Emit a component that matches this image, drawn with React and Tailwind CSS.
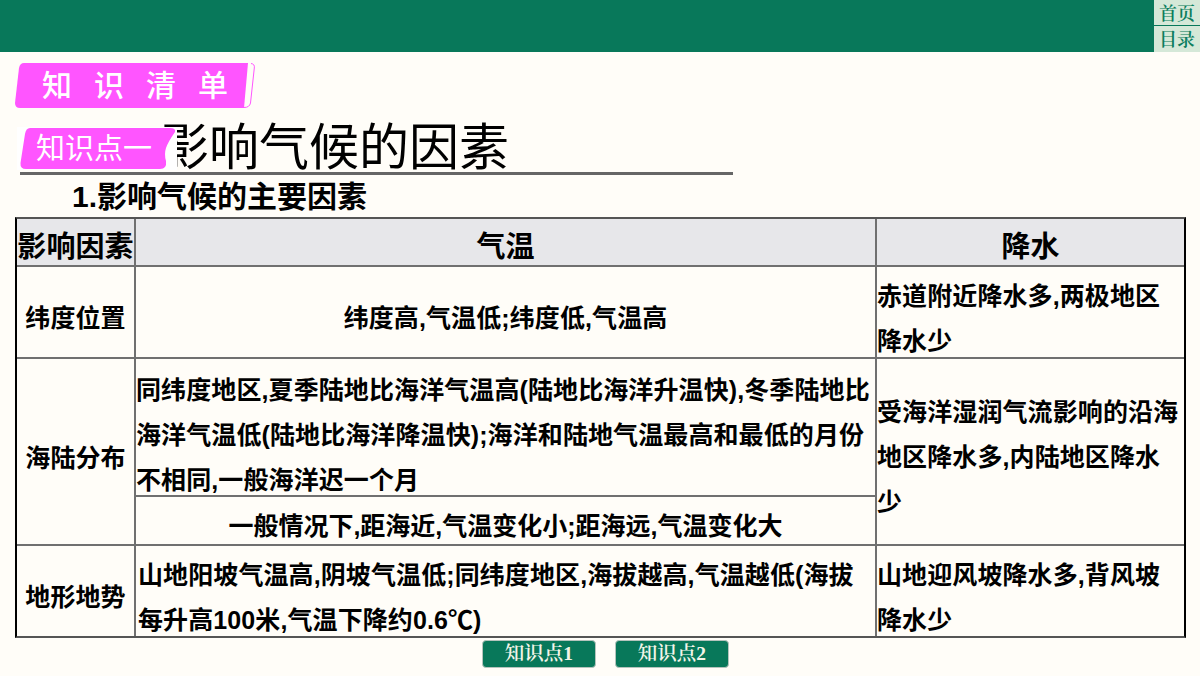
import React from 'react';

const cjk = "font-['Liberation_Sans','Noto_Sans_CJK_SC',sans-serif]";
const serif = "font-['Liberation_Serif','Noto_Serif_CJK_SC','Noto_Sans_CJK_SC',serif]";

const Cell = ({ className = '', children }) => (
  <div className={`flex border-[#707070] ${className}`}>{children}</div>
);

const NavButton = ({ children }) => (
  <button className={`w-[114px] h-[28px] rounded-[4px] bg-[#08785a] border border-[#b5c4bd] text-[#f3f5e8] text-[19.5px] font-semibold leading-none ${serif}`}>
    {children}
  </button>
);

export default function App() {
  return (
    <div className={`w-[1200px] h-[676px] overflow-hidden bg-[#fffdf8] text-black ${cjk}`}>
      {/* Top bar */}
      <header className="flex h-[52px] bg-[#08785a]">
        <div className="flex-1" />
        <div className={`w-[46px] flex flex-col text-[#0b7d5d] text-[18px] font-semibold leading-none ${serif}`}>
          <div className="h-[25px] pt-[2px] bg-[#d5e8d8] flex items-center justify-center">首页</div>
          <div className="h-[26px] pt-[2px] mt-[1px] bg-[#d5e8d8] flex items-center justify-center">目录</div>
        </div>
      </header>

      <div className="pl-[15px] pt-[11px]">
        {/* Section ribbon */}
        <div className="relative w-[240px] h-[45px] flex items-center pl-[27px]">
          <svg className="absolute left-0 top-0" width="241" height="45" viewBox="0 0 241 45" fill="none">
            <path d="M9 0H233L229 45H5Q0 45 0 40L4 5Q5 0 9 0Z" fill="#ff55ff" />
            <path d="M236 .5Q240 1 239.300 5L235.500 40Q234.500 44.500 229 44.500" stroke="#ff55ff" strokeWidth="1" />
          </svg>
          <span className="relative text-white text-[30px] font-medium leading-none tracking-[22px] whitespace-nowrap">知识清单</span>
        </div>

        {/* Heading */}
        <div className="relative w-[713px] h-[67px] ml-[5px] border-b-[3px] border-[#666]">
          <h1 className="absolute left-[139px] top-[10px] text-[50px] font-normal leading-[60px] whitespace-nowrap">影响气候的因素</h1>
          <div className="absolute left-[-3px] top-[19px] w-[160px] h-[43px] pr-[6px] pt-[2px] bg-white flex items-center justify-center">
            <svg className="absolute left-[3px] top-[1px]" width="156" height="41" viewBox="0 0 156 41">
              <path d="M10 0H150Q156 0 155 4Q148 14 146 20Q144 26 146 33Q147 41 140 41H6Q0 41 .5 35L5 6Q6 0 10 0Z" fill="#ff55ff" />
            </svg>
            <span className="relative text-white text-[29px] leading-none whitespace-nowrap">知识点一</span>
          </div>
        </div>
        <h2 className="pl-[57px] pt-[1px] h-[42px] text-[30px] font-bold leading-[42px] whitespace-nowrap">1.影响气候的主要因素</h2>

        {/* Table */}
        <div className="w-[1171px] grid grid-cols-[119px_741px_307px] grid-rows-[48px_92px_138px_49px_90px] border-2 border-[#555] border-l-black border-r-black text-[25px] font-bold leading-[45px] tracking-[0.1px]">
          <Cell className="items-center pt-[10px] justify-center bg-[#e7e7ea] text-[29px] border-r-2 border-b-2 whitespace-nowrap">影响因素</Cell>
          <Cell className="items-center pt-[10px] justify-center bg-[#e7e7ea] text-[29px] border-r-2 border-b-2">气温</Cell>
          <Cell className="items-center pt-[10px] justify-center bg-[#e7e7ea] text-[29px] border-b-2">降水</Cell>

          <Cell className="items-center pt-[12px] justify-center border-r-2 border-b-2">纬度位置</Cell>
          <Cell className="items-center pt-[12px] justify-center border-r-2 border-b-2">纬度高,气温低;纬度低,气温高</Cell>
          <Cell className="items-center pt-[13px] border-b-2">赤道附近降水多,两极地区降水少</Cell>

          <Cell className="row-span-2 items-center pt-[14px] justify-center border-r-2 border-b-2">海陆分布</Cell>
          <Cell className="items-start pt-[9px] border-r-2 border-b-2">同纬度地区,夏季陆地比海洋气温高(陆地比海洋升温快),冬季陆地比海洋气温低(陆地比海洋降温快);海洋和陆地气温最高和最低的月份不相同,一般海洋迟一个月</Cell>
          <Cell className="row-span-2 items-center pt-[11px] border-b-2">受海洋湿润气流影响的沿海地区降水多,内陆地区降水少</Cell>
          <Cell className="items-center pt-[12px] justify-center tracking-normal border-r-2 border-b-2">一般情况下,距海近,气温变化小;距海远,气温变化大</Cell>

          <Cell className="items-center pt-[13px] justify-center border-r-2">地形地势</Cell>
          <Cell className="items-center pt-[13px] pl-[2px] border-r-2">山地阳坡气温高,阴坡气温低;同纬度地区,海拔越高,气温越低(海拔每升高100米,气温下降约0.6℃)</Cell>
          <Cell className="items-center pt-[13px]">山地迎风坡降水多,背风坡降水少</Cell>
        </div>

        {/* Footer nav */}
        <nav className="flex gap-[19px] pt-[2px] pl-[467px]">
          <NavButton>知识点1</NavButton>
          <NavButton>知识点2</NavButton>
        </nav>
      </div>
    </div>
  );
}
